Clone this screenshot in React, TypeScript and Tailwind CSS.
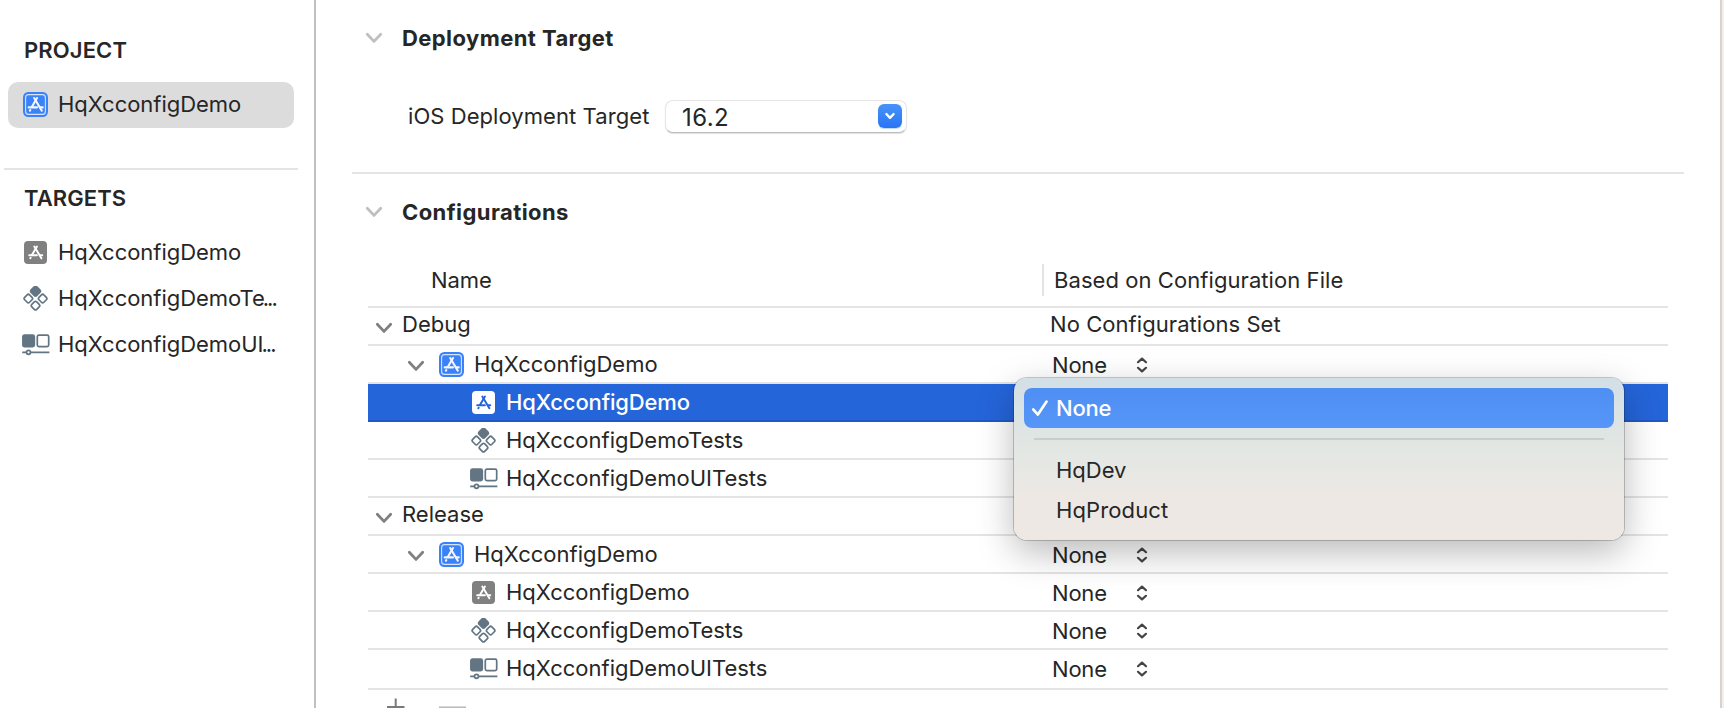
import type { ReactNode } from "react";

type IconKind = "project" | "app" | "appSelected" | "tests" | "uitests";

function AppGlyph({ className }: { className: string }) {
  return (
    <g className={className} fill="none" strokeWidth="2.1" strokeLinecap="round">
      <path d="M11.2 6 L18.8 18.7" />
      <path d="M14 6 L8.8 15" />
      <path d="M5.7 15.4 H14" />
      <path d="M17.2 15.4 H19.7" />
      <path d="M7.3 18.1 L6.9 18.7" />
    </g>
  );
}

function ItemIcon({ kind }: { kind: IconKind }) {
  if (kind === "project") {
    return (
      <svg width="25" height="25" viewBox="0 0 25 25" className="block">
        <rect width="25" height="25" rx="5.2" className="fill-[#3a82f7]" />
        <rect x="2.6" y="2.6" width="19.8" height="19.8" rx="3" fill="none" strokeWidth="1.1" className="stroke-[#d5e3fb]" />
        <AppGlyph className="stroke-[#f3f6fc]" />
      </svg>
    );
  }
  if (kind === "app" || kind === "appSelected") {
    const selected = kind === "appSelected";
    return (
      <svg width="25" height="25" viewBox="0 0 25 25" className="block">
        <rect x="1" y="1" width="23" height="23" rx="4" className={selected ? "fill-white" : "fill-[#808080]"} />
        <g transform="translate(0.9 0.9) scale(0.93)">
          <AppGlyph className={selected ? "stroke-[#2563d9]" : "stroke-white"} />
        </g>
      </svg>
    );
  }
  if (kind === "tests") {
    return (
      <svg width="25" height="25" viewBox="0 0 25 25" className="block stroke-[#637583]" fill="none" strokeWidth="1.7">
        <rect x="8.6" y="1.3" width="7.8" height="7.8" rx="1.8" transform="rotate(45 12.5 5.2)" className="fill-[#637583]" />
        <rect x="1.9" y="9.1" width="6.9" height="6.9" rx="1.7" transform="rotate(45 5.35 12.55)" />
        <rect x="16.2" y="9.1" width="6.9" height="6.9" rx="1.7" transform="rotate(45 19.65 12.55)" />
        <rect x="9.05" y="16.2" width="6.9" height="6.9" rx="1.7" transform="rotate(45 12.5 19.65)" />
      </svg>
    );
  }
  return (
    <svg width="28" height="22" viewBox="0 0 28 22" className="block shrink-0 stroke-[#637583]" fill="none" strokeWidth="1.7">
      <rect x="0.9" y="1.2" width="11.4" height="11.4" rx="1.6" className="fill-[#637583]" />
      <rect x="15.3" y="1.2" width="11.4" height="11.4" rx="1.6" />
      <path d="M0.2 18.3 H4.4 M8.6 18.3 H27.4" />
      <circle cx="6.5" cy="18.3" r="2" />
    </svg>
  );
}

function IconSlot({ kind }: { kind: IconKind }) {
  return (
    <div className={kind === "uitests" ? "w-[28px] shrink-0" : "w-[28px] shrink-0 pl-px"}>
      <ItemIcon kind={kind} />
    </div>
  );
}

function Chevron({ className }: { className: string }) {
  return (
    <svg width="18" height="12" viewBox="0 0 18 12" fill="none" strokeWidth="2.8" strokeLinecap="round" strokeLinejoin="round" className={className}>
      <path d="M2.3 2.2 L9 9.4 L15.7 2.2" />
    </svg>
  );
}

function Stepper() {
  return (
    <svg width="12" height="16" viewBox="0 0 12 16" fill="none" strokeWidth="2.2" strokeLinecap="round" strokeLinejoin="round" className="mt-px block stroke-[#444444]">
      <path d="M2 5.2 L6 1.6 L10 5.2 M2 10.8 L6 14.4 L10 10.8" />
    </svg>
  );
}

function SidebarItem({ kind, label, truncated, selected }: { kind: IconKind; label: string; truncated?: boolean; selected?: boolean }) {
  return (
    <div className={selected ? "flex h-[46px] items-center rounded-[10px] bg-[#dcdcdc] pb-px pl-[14px]" : "flex h-[46px] items-center pb-px pl-[14px]"}>
      <IconSlot kind={kind} />
      <span className="ml-[8px] pb-px tracking-[-0.03px] whitespace-nowrap">
        {label}
        {truncated && <span className="-ml-[2px] tracking-[-2px]">...</span>}
      </span>
    </div>
  );
}

function Section({ title }: { title: string }) {
  return (
    <div className="flex h-8 items-center pl-[49px]">
      <Chevron className="stroke-[#bfbfbf]" />
      <h2 className="ml-[19px] font-bold tracking-[0.42px]">{title}</h2>
    </div>
  );
}

function Row({ name, value, selected, last }: { name: ReactNode; value?: ReactNode; selected?: boolean; last?: boolean }) {
  const base = "flex border-b-2 ";
  const tone = selected
    ? "h-[38px] border-[#1f59c4] bg-[#2565da] font-[450] tracking-[-0.15px] text-white"
    : last
      ? "h-10 border-[#e4e4e4]"
      : "h-[38px] border-[#e4e4e4]";
  return (
    <div className={base + tone}>
      <div className="flex h-9 w-[675px] shrink-0 items-center">{name}</div>
      <div className="flex h-9 items-center">{value}</div>
    </div>
  );
}

function GroupRow({ label, value }: { label: string; value?: string }) {
  return (
    <Row
      name={
        <div className="flex h-9 items-center pl-[7px]">
          <Chevron className="mt-[4px] stroke-[#808080]" />
          <span className="ml-[9px] pb-1">{label}</span>
        </div>
      }
      value={value && <span className="pb-1 pl-[7px] tracking-[0.06px]">{value}</span>}
    />
  );
}

function NoneValue() {
  return (
    <div className="flex items-center pl-[9px]">
      <span className="w-[84px] pt-0.5 tracking-[-0.2px]">None</span>
      <Stepper />
    </div>
  );
}

function ProjectRow() {
  return (
    <Row
      name={
        <div className="flex items-center pl-[39px]">
          <Chevron className="mt-[4px] stroke-[#808080]" />
          <div className="mt-px ml-[14px]">
            <ItemIcon kind="project" />
          </div>
          <span className="ml-[10px]">HqXcconfigDemo</span>
        </div>
      }
      value={<NoneValue />}
    />
  );
}

function LeafRow({ kind, label, selected, last, value }: { kind: IconKind; label: string; selected?: boolean; last?: boolean; value?: boolean }) {
  return (
    <Row
      selected={selected}
      last={last}
      name={
        <div className="flex items-center pl-[102px]">
          <div className="mt-px">
            <IconSlot kind={kind} />
          </div>
          <span className="ml-[8px]">{label}</span>
        </div>
      }
      value={value && <NoneValue />}
    />
  );
}

function Menu() {
  return (
    <div className="absolute top-[114px] left-[646px] h-[162px] w-[610px] rounded-[13px] bg-linear-to-b from-[#d2dfe6] via-[#e3e7e3] via-45% to-[#ede8e4] to-75% px-[10px] pt-[10px] text-[#262626] shadow-[0_0_0_1px_rgba(0,0,0,0.2),0_12px_36px_rgba(0,0,0,0.28)]">
      <div className="flex h-10 items-center rounded-lg bg-linear-to-b from-[#4e8ff3] to-[#5795f8] pl-[6px] font-[450] text-white">
        <svg width="20" height="18" viewBox="0 0 20 18" fill="none" strokeWidth="2.7" strokeLinecap="round" strokeLinejoin="round" className="stroke-white">
          <path d="M3.2 10.4 L7.9 15.6 L16.6 2.6" />
        </svg>
        <span className="ml-[6px] tracking-[-0.2px]">None</span>
      </div>
      <div className="mx-[10px] mt-[10px] h-0.5 bg-[#c9cecb]" />
      <div className="mt-[10px] flex h-10 items-center pl-8">HqDev</div>
      <div className="flex h-10 items-center pl-8 tracking-[0.12px]">HqProduct</div>
    </div>
  );
}

export default function App() {
  return (
    <div className="flex h-[708px] w-[1724px] overflow-hidden bg-white font-[Inter,sans-serif] text-[22px] leading-8 text-[#262626]">
      <aside className="w-[316px] shrink-0 border-r-2 border-[#c0c0c0] pt-[34px]">
        <h3 className="pl-6 font-semibold tracking-[0.12px]">PROJECT</h3>
        <div className="mt-4 ml-2 w-[286px]">
          <SidebarItem kind="project" label="HqXcconfigDemo" selected />
        </div>
        <div className="mt-10 ml-1 h-0.5 w-[294px] bg-[#e4e4e4]" />
        <h3 className="mt-3 pl-6 font-semibold tracking-[0.08px]">TARGETS</h3>
        <div className="mt-4 ml-2">
          <SidebarItem kind="app" label="HqXcconfigDemo" />
          <SidebarItem kind="tests" label="HqXcconfigDemoTe" truncated />
          <SidebarItem kind="uitests" label="HqXcconfigDemoUI" truncated />
        </div>
      </aside>

      <main className="w-[1404px] shrink-0 pt-[22px]">
        <Section title="Deployment Target" />
        <div className="mt-[45px] flex h-[34px] items-center pl-[92px]">
          <span className="w-[257px] tracking-[0.07px]">iOS Deployment Target</span>
          <div className="flex h-[33px] w-[242px] items-center justify-between rounded-[8px] border border-[#e6e6e6] border-b-[#bdbdbd] bg-white pr-[4px] pl-4 shadow-[0_1px_1px_rgba(0,0,0,0.12)]">
            <span className="pt-1 text-[24px] tracking-[0.4px]">16.2</span>
            <div className="flex size-6 items-center justify-center rounded-[6px] bg-linear-to-b from-[#4893f8] to-[#2a74f5] shadow-[0_1px_1px_rgba(42,116,245,0.3)]">
              <svg width="12" height="8" viewBox="0 0 12 8" fill="none" strokeWidth="2.4" strokeLinecap="round" strokeLinejoin="round" className="stroke-white">
                <path d="M2.4 2 L6 5.8 L9.6 2" />
              </svg>
            </div>
          </div>
        </div>
        <div className="mt-[39px] ml-9 h-0.5 w-[1332px] bg-[#e4e4e4]" />
        <div className="mt-[22px]">
          <Section title="Configurations" />
        </div>

        <div className="relative mt-9 ml-[52px] w-[1300px]">
          <div className="flex h-11 border-b-2 border-[#e4e4e4]">
            <div className="w-[674px] pl-[63px] tracking-[-0.1px]">Name</div>
            <div className="h-8 border-l-2 border-[#e4e4e4] pl-[10px] tracking-[0.07px]">Based on Configuration File</div>
          </div>
          <GroupRow label="Debug" value="No Configurations Set" />
          <ProjectRow />
          <LeafRow kind="appSelected" label="HqXcconfigDemo" selected />
          <LeafRow kind="tests" label="HqXcconfigDemoTests" />
          <LeafRow kind="uitests" label="HqXcconfigDemoUITests" />
          <GroupRow label="Release" />
          <ProjectRow />
          <LeafRow kind="app" label="HqXcconfigDemo" value />
          <LeafRow kind="tests" label="HqXcconfigDemoTests" value />
          <LeafRow kind="uitests" label="HqXcconfigDemoUITests" value last />
          <div className="flex h-[18px] overflow-hidden pt-[8px]">
            <svg width="100" height="18" viewBox="0 0 100 18" fill="none" strokeWidth="2">
              <path d="M27.7 0.5 V18 M19 9 H36.5" className="stroke-[#7a7a7a]" />
              <path d="M71 9.4 H98" className="stroke-[#bcbcbc]" />
            </svg>
          </div>
          <Menu />
        </div>
      </main>
      <div className="w-1 shrink-0 border-l-2 border-[#d8d2ce] bg-[#f5efeb]" />
    </div>
  );
}
